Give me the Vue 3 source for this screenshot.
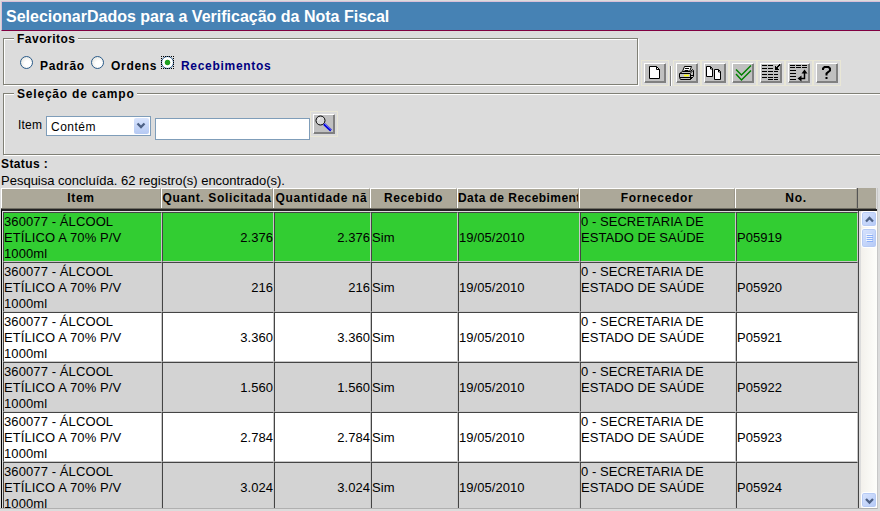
<script setup>
const favorites = [
  { label: 'Padrão', width: 71 },
  { label: 'Ordens', width: 70 },
  { label: 'Recebimentos', width: 120, checked: true },
]

const columns = ['Item', 'Quant. Solicitada', 'Quantidade nã', 'Recebido', 'Data de Recebimento', 'Fornecedor', 'No.']

const rows = [
  { requested: '2.376', order: 'P05919' },
  { requested: '216', order: 'P05920' },
  { requested: '3.360', order: 'P05921' },
  { requested: '1.560', order: 'P05922' },
  { requested: '2.784', order: 'P05923' },
  { requested: '3.024', order: 'P05924' },
]
</script>

<template>
  <div class="page">
    <header class="title"><span>SelecionarDados para a Verificação da Nota Fiscal</span></header>

    <div class="top">
      <section class="group favorites">
        <div class="legend tight">Favoritos</div>
        <div class="radios">
          <label v-for="f in favorites" :key="f.label" :style="{ width: f.width + 'px' }" :class="{ checked: f.checked }">
            <i class="radio"></i><span>{{ f.label }}</span>
          </label>
        </div>
      </section>

      <div class="toolbar">
        <div class="slot"><button class="btn" aria-label="Novo">
          <svg width="20" height="18" viewBox="0 0 20 18"><path d="M4.500 2.500h7l3 3v9h-10z" fill="#fff" stroke="#000" /><path d="M11.500 2.500v3h3" fill="none" stroke="#000" /></svg>
        </button></div>
        <i class="divider"></i>
        <div class="slot"><button class="btn" aria-label="Imprimir">
          <svg width="20" height="18" viewBox="0 0 20 18">
            <path d="M5.500 7.500l2-5h7l-2 5" fill="#fff" stroke="#000" />
            <path d="M8 4.500h4M7.500 6.500h4" stroke="#000" />
            <path d="M2.500 9.500l3-2h8l2-2 1 1v6l-3 3h-10l-1-2z" fill="#c0c0c0" stroke="#000" />
            <path d="M3 9.500h10l3-3M13.500 9.500v6M3 13.500h10M14 11.500h3M14 13.500h2" fill="none" stroke="#000" />
            <path d="M7 11.500h5" stroke="#ff0" stroke-width="1.500" />
          </svg>
        </button></div>
        <div class="slot"><button class="btn" aria-label="Copiar">
          <svg width="20" height="18" viewBox="0 0 20 18"><path d="M1.500 2.500h4l2 2v8h-6zM9.500 5.500h4l2 2v8h-6z" fill="#fff" stroke="#000" /><path d="M5.500 2.500v2.500h2M13.500 5.500v2.500h2" fill="none" stroke="#000" /></svg>
        </button></div>
        <div class="slot"><button class="btn" aria-label="Confirmar">
          <svg width="20" height="18" viewBox="0 0 20 18"><path d="M3 5.500l5.500 5.500L18 1.500M3 10l5.500 6L18 6.500" fill="none" stroke="#008000" stroke-width="1.500" /></svg>
        </button></div>
        <div class="slot"><button class="btn" aria-label="Colunas">
          <svg width="20" height="18" viewBox="0 0 20 18" shape-rendering="crispEdges"><path d="M1 1.500h5M7 1.500h5M1 4.500h5M7 4.500h5M1 7.500h5M7 7.500h5M13 7.500h4M1 10.500h5M7 10.500h5M13 10.500h4M1 13.500h5M7 13.500h5M13 13.500h4M7 15.500h5M13 15.500h4" stroke="#000" /><path d="M19 .5l-4 4" stroke="#000" /><path d="M14 2v4h4z" fill="#000" /></svg>
        </button></div>
        <div class="slot"><button class="btn" aria-label="Reorganizar">
          <svg width="20" height="18" viewBox="0 0 20 18"><path d="M1 1.500h5M7 1.500h5M13 1.500h5M1 3.500h5M7 3.500h5M13 3.500h5M1 6.500h6M1 9.500h6M1 12.500h6M1 15.500h6" stroke="#000" /><path d="M15.500 8v6.500H11" fill="none" stroke="#000" stroke-width="1.500" /><path d="M15.500 5.500l3 4h-6zM8.500 14.500l4-3v6z" fill="#000" /></svg>
        </button></div>
        <div class="slot"><button class="btn" aria-label="Ajuda">
          <svg width="20" height="18" viewBox="0 0 20 18"><path d="M6 6V4.500L7.500 3h4L13 4.500V6.500L9.500 9.500v2" fill="none" stroke="#000" stroke-width="2" /><path d="M8.500 13h2v2h-2z" fill="#000" /></svg>
        </button></div>
      </div>
    </div>

    <section class="group filter">
      <div class="legend">Seleção de campo</div>
      <div class="fields">
        <span class="field-name">Item</span>
        <div class="select"><span>Contém</span><i class="drop"><svg width="14" height="15" viewBox="0 0 14 15"><path d="M3.500 5.500L7 9l3.500-3.500" fill="none" stroke="#4d6185" stroke-width="2.300" /></svg></i></div>
        <input class="input" aria-label="Item" />
        <div class="slot search"><button class="btn" aria-label="Pesquisar">
          <svg width="20" height="18" viewBox="0 0 20 18"><circle cx="6.500" cy="5.500" r="4.500" fill="#d8d8d8" stroke="#000" /><path d="M4 5.500l2-2.500" stroke="#fff" /><path d="M10 9l7 6.500" stroke="#0000e0" stroke-width="2.500" /><path d="M10.500 8.500l7 6.500" stroke="#fff" stroke-width=".5" /></svg>
        </button></div>
      </div>
    </section>

    <div class="status"><b>Status :</b><p>Pesquisa concluída. 62 registro(s) encontrado(s).</p></div>

    <div class="table">
      <div class="head">
        <div class="grid"><div v-for="c in columns" :key="c" class="th">{{ c }}</div></div>
      </div>
      <div class="view">
        <div class="body">
          <div v-for="(r, i) in rows" :key="r.order" class="grid row" :class="{ selected: i === 0, odd: i % 2 === 1 }">
            <div class="td item">360077 - ÁLCOOL<br>ETÍLICO A 70% P/V<br>1000ml</div>
            <div class="td mid num">{{ r.requested }}</div>
            <div class="td mid num">{{ r.requested }}</div>
            <div class="td mid">Sim</div>
            <div class="td mid">19/05/2010</div>
            <div class="td">0 - SECRETARIA DE<br>ESTADO DE SAÚDE</div>
            <div class="td mid">{{ r.order }}</div>
          </div>
        </div>
        <div class="scroll">
          <i class="sb"><svg width="13" height="13" viewBox="0 0 13 13"><path d="M3 8.500L6.500 5 10 8.500" fill="none" stroke="#4d6185" stroke-width="2.300" /></svg></i>
          <i class="sb thumb"><svg width="13" height="17" viewBox="0 0 13 17"><path d="M3 4.500h6M3 6.500h6M3 8.500h6M3 10.500h6" stroke="#eef4fe" /><path d="M4 5.500h6M4 7.500h6M4 9.500h6M4 11.500h6" stroke="#8cb0f8" /></svg></i>
          <i class="sb last"><svg width="13" height="13" viewBox="0 0 13 13"><path d="M3 5L6.500 8.500 10 5" fill="none" stroke="#4d6185" stroke-width="2.300" /></svg></i>
        </div>
      </div>
    </div>
  </div>
</template>

<style>
body { background: #dcdcdc; overflow: hidden; }
</style>

<style scoped>
* { box-sizing: border-box; }
.page { width: 880px; height: 511px; overflow: hidden; background: #dcdcdc; font: 13px/16px "Liberation Sans", Arial, sans-serif; color: #000; }
svg { display: block; }
.title { height: 30px; margin: 1px 0 0 1px; border-top: 1px solid #d8bfd8; border-left: 1px solid #d8bfd8; border-bottom: 1px solid #800040; background: #4682b4; color: #fff; font-weight: bold; font-size: 16px; line-height: 29px; padding-left: 4px; white-space: nowrap; }
.top { height: 62px; padding: 7px 0 0 3px; display: flex; }
.group { border: 1px solid #808076; box-shadow: 1px 1px 0 #fff, inset 1px 1px 0 #fff; }
.legend { width: fit-content; margin: -8px 0 0 10px; padding: 0 2px 0 3px; background: #dcdcdc; font-weight: bold; font-size: 12px; line-height: 17px; height: 16px; letter-spacing: .8px; white-space: nowrap; }
.tight { letter-spacing: .5px; }
.favorites { width: 635px; height: 47px; flex: none; }
.radios { display: flex; margin: 9px 0 0 16px; font-weight: bold; font-size: 12px; letter-spacing: .7px; }
.radios label { display: flex; flex: none; }
.radios span { margin: 2px 0 0 7px; }
.radio { flex: none; width: 13px; height: 13px; border: 1px solid #2a5b8a; border-radius: 50%; background: radial-gradient(circle at 60% 60%, #fff 30%, #dcdcd4); }
.checked { color: #000080; }
.checked .radio { position: relative; background: radial-gradient(circle, #21a121 0 2.300px, #fff 3.200px); }
.checked .radio::after { content: ""; position: absolute; inset: -1px; border: 1px dotted #000; }
.toolbar { display: flex; margin: 22px 0 0 3px; height: 26px; }
.slot { width: 28px; height: 26px; border: 1px solid #e9e7d6; padding: 2px; flex: none; }
.btn { display: block; width: 22px; height: 20px; padding: 0; background: #c0c0c0; border: 1px solid; border-color: #fff #808080 #808080 #fff; box-shadow: inset -1px -1px 0 #808080; }
.divider { width: 2px; height: 20px; margin: 6px 1px 0; background: linear-gradient(90deg, #808080 50%, #fff 50%); }
.filter { width: 900px; height: 62px; margin-left: 3px; }
.fields { display: flex; margin: 8px 0 0 14px; height: 32px; align-items: flex-start; }
.field-name { width: 28px; padding-top: 7px; font-size: 12px; letter-spacing: .2px; }
.select { width: 105px; height: 20px; margin-top: 6px; padding: 1px 1px 1px 4px; display: flex; justify-content: space-between; border: 1px solid #7f9db9; background: #fff; line-height: 18px; font-size: 12px; letter-spacing: .5px; }
.drop { width: 15px; height: 16px; border-radius: 2px; background: linear-gradient(#d8e4fd, #b5c9f3); }
.input { width: 155px; height: 22px; margin: 8px 0 0 4px; padding: 0; border: 1px solid #7f9db9; background: #fff; border-radius: 0; outline: 0; }
.search { margin-top: 1px; }
.status { height: 33px; padding: 1px 0 0 1px; }
.status b { display: block; font-size: 12px; letter-spacing: .4px; }
.status p { margin: 1px 0 0; }
.table { width: 878px; height: 321px; border-right: 1px solid #c8c8c8; border-bottom: 1px solid #b0b0b0; }
.grid { display: grid; grid-template-columns: 159px 112px 97px 87px 122px 156px 122px; grid-template-rows: 50px; }
.head { width: 875px; height: 21px; margin-left: 1px; padding-left: 0; background: #aca899; border-bottom: 1px solid #716f64; }
.head .grid { width: 857px; border-right: 1px solid #555; grid-template-columns: 160px 112px 97px 87px 122px 156px 122px; grid-template-rows: 20px; }
.th { height: 20px; overflow: hidden; border-top: 1px solid #fff; border-left: 1px solid #fff; border-right: 1px solid #9b978a; text-align: center; font-weight: bold; font-size: 12px; line-height: 19px; letter-spacing: .65px; white-space: nowrap; }
.th:nth-child(5) { text-align: left; letter-spacing: .45px; }
.view { height: 299px; margin-left: 1px; border-left: 1px solid #000; border-top: 2px solid #222; display: flex; overflow: hidden; background: #dcdcdc; }
.body { width: 857px; padding: 1px 0 0 1px; overflow: hidden; border-right: 1px solid #444; flex: none; }
.row { height: 50px; background: #fff; }
.row.odd { background: #d3d3d3; }
.row.selected { background: #32cd32; }
.td { padding-top: 1px; border-top: 1px solid #444; border-left: 1px solid #444; border-right: 1px solid #c8c8c8; border-bottom: 1px solid #c8c8c8; white-space: nowrap; letter-spacing: .05px; }
.td.item { letter-spacing: .1px; }
.td.mid { padding-top: 17px; }
.num { text-align: right; }
.scroll { width: 18px; padding-left: 2px; display: flex; flex-direction: column; background: linear-gradient(90deg, #dcdcdc 2px, #f3f1ec 2px, #fefefb); }
.sb { width: 16px; height: 16px; padding: 1px; border: 1px solid #fff; border-radius: 3px; background: linear-gradient(135deg, #d8e4fe, #b4c9f6); box-shadow: inset 0 0 0 1px #b7cbf5; }
.thumb { height: 20px; margin-top: 1px; }
.last { margin-top: auto; }
</style>
